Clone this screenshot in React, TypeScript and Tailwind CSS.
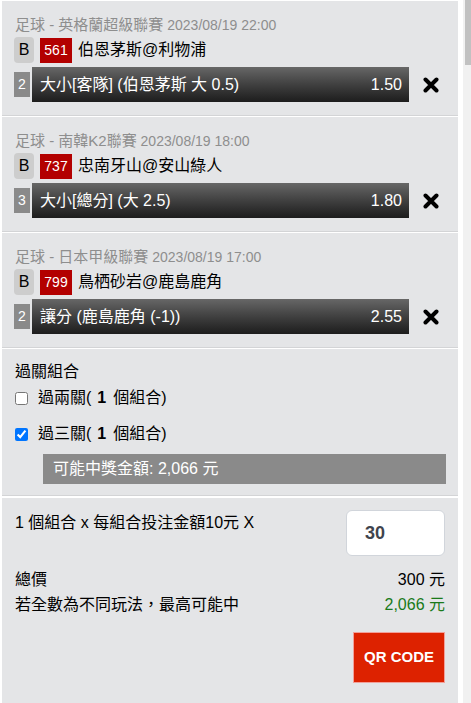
import React from "react";

const FONT = { fontFamily: '"Liberation Sans", "Noto Sans CJK TC", sans-serif' };

type Bet = {
  sport: string;
  date: string;
  id: string;
  teams: string;
  n: string;
  bet: string;
  odds: string;
};

const bets: Bet[] = [
  {
    sport: "足球 - 英格蘭超級聯賽",
    date: "2023/08/19 22:00",
    id: "561",
    teams: "伯恩茅斯@利物浦",
    n: "2",
    bet: "大小[客隊] (伯恩茅斯 大 0.5)",
    odds: "1.50",
  },
  {
    sport: "足球 - 南韓K2聯賽",
    date: "2023/08/19 18:00",
    id: "737",
    teams: "忠南牙山@安山綠人",
    n: "3",
    bet: "大小[總分] (大 2.5)",
    odds: "1.80",
  },
  {
    sport: "足球 - 日本甲級聯賽",
    date: "2023/08/19 17:00",
    id: "799",
    teams: "鳥栖砂岩@鹿島鹿角",
    n: "2",
    bet: "讓分 (鹿島鹿角 (-1))",
    odds: "2.55",
  },
];

function CloseIcon() {
  return (
    <svg width="16" height="16" viewBox="0 0 16 16" className="block">
      <path d="M2.5 2.5 L13.5 13.5 M13.5 2.5 L2.5 13.5" stroke="#000" strokeWidth="4" strokeLinecap="round" fill="none" />
    </svg>
  );
}

function BetItem({ b }: { b: Bet }) {
  return (
    <div className="bg-[#e4e5e7] border-b border-[#d3d4d6] mb-[1px] pt-[14px] pb-[13px] pl-[12px]">
      <div className="h-5 leading-5 text-[#8e8e8e] whitespace-nowrap pl-[1px]">
        <span className="text-[15px]">{b.sport}</span>
        <span className="text-[14px]"> {b.date}</span>
      </div>
      <div className="mt-[2px] h-[26px] flex items-center">
        <div className="w-[20px] h-[26px] rounded-[4px] bg-[#cdcdcd] flex items-center justify-center text-[16px] text-black">
          B
        </div>
        <div className="ml-[6px] w-[32px] h-[25px] bg-[#b30000] flex items-center justify-center text-[14px] text-white">
          {b.id}
        </div>
        <div className="ml-[6px] text-[16px] text-black">{b.teams}</div>
      </div>
      <div className="mt-[4px] h-[35px] flex items-center">
        <div className="w-[16px] h-[25px] bg-[#8a8a8a] flex items-center justify-center text-[14px] text-white">
          {b.n}
        </div>
        <div className="ml-[2px] w-[377px] h-[35px] bg-linear-to-b from-[#676767] to-[#1d1d1d] flex items-center justify-between pl-[8px] pr-[7px] text-[16px] text-white">
          <span>{b.bet}</span>
          <span>{b.odds}</span>
        </div>
        <div className="ml-[14px]">
          <CloseIcon />
        </div>
      </div>
    </div>
  );
}

export default function App() {
  return (
    <div className="w-[471px] h-[703px] overflow-hidden bg-white flex" style={FONT}>
      <div className="w-[2px] shrink-0" />
      <div className="w-[456px] shrink-0 pt-[1px] flex flex-col">
        {bets.map((b) => (
          <BetItem key={b.id} b={b} />
        ))}
        <div className="bg-[#e4e5e7] border-b border-[#d3d4d6] mb-[2px] pt-[13px] pb-[11px] pl-[13px] pr-[12px]">
          <div className="h-5 leading-5 text-[16px] text-black">過關組合</div>
          <label className="mt-[6px] h-5 flex items-center text-[16px] text-black">
            <input type="checkbox" className="m-0 w-[13px] h-[13px]" readOnly />
            <span className="ml-[10px]">
              過兩關(<b className="pl-[6px] pr-[7px]">1</b>個組合)
            </span>
          </label>
          <label className="mt-[16px] h-5 flex items-center text-[16px] text-black">
            <input type="checkbox" className="m-0 w-[13px] h-[13px]" defaultChecked />
            <span className="ml-[10px]">
              過三關(<b className="pl-[6px] pr-[7px]">1</b>個組合)
            </span>
          </label>
          <div className="mt-[10px] ml-[28px] h-[30px] bg-[#8a8a8a] flex items-center pl-[10px] text-[16px] text-white">
            可能中獎金額: 2,066 元
          </div>
        </div>
        <div className="bg-[#e4e5e7] flex-1 pt-[12px] pl-[13px] pr-[13px]">
          <div className="flex justify-between items-start">
            <div className="text-[16px] text-black leading-5 pt-[3px]">1 個組合 x 每組合投注金額10元 X</div>
            <div className="w-[99px] h-[46px] bg-white rounded-[6px] border border-[#d1d5db] flex items-center pl-[18px] text-[18px] font-semibold text-[#3f444d]">
              30
            </div>
          </div>
          <div className="mt-[14px] flex justify-between text-[16px] leading-5 text-black">
            <span>總價</span>
            <span>300 元</span>
          </div>
          <div className="mt-[5px] flex justify-between text-[16px] leading-5">
            <span className="text-black">若全數為不同玩法，最高可能中</span>
            <span className="text-[#1a7a1a]">2,066 元</span>
          </div>
          <div className="mt-[17px] flex justify-end">
            <div className="w-[92px] h-[51px] bg-[#dd2200] border border-[#f2a09a] flex items-center justify-center text-white font-bold text-[15px]">
              QR CODE
            </div>
          </div>
        </div>
      </div>
      <div className="w-[5px] shrink-0" />
      <div className="w-[8px] shrink-0 bg-[#f1f1f1] flex justify-end">
        <div className="w-[6px] h-[65px] bg-[#c1c1c1]" />
      </div>
    </div>
  );
}
